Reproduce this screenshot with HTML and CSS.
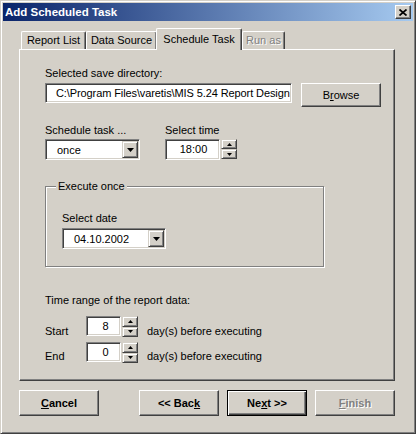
FILE: index.html
```html
<!DOCTYPE html>
<html>
<head>
<meta charset="utf-8">
<link rel="stylesheet" href="styles.css">
</head>
<body>
<div class="window">
  <div class="titlebar">
    <span class="title">Add Scheduled Task</span>
    <span class="close"><svg width="8" height="7" viewBox="0 0 8 7"><path d="M0.5 0.5 L7.5 6.5 M7.5 0.5 L0.5 6.5" stroke="#000" stroke-width="1.7" fill="none"/></svg></span>
  </div>
  <div class="tabs">
    <div class="tab t1">Report List</div>
    <div class="tab t2">Data Source</div>
    <div class="tab sel">Schedule Task</div>
    <div class="tab dis">Run as</div>
  </div>
  <div class="panel">
    <div class="label first">Selected save directory:</div>
    <div class="row dir-row">
      <div class="edit path">C:\Program Files\varetis\MIS 5.24 Report Design</div>
      <div class="btn browse">B<u>r</u>owse</div>
    </div>
    <div class="row sched-row">
      <div class="col col-task">
        <div class="label">Schedule task ...</div>
        <div class="combo task-combo"><span class="val">once</span><span class="dd"><svg width="7" height="4" viewBox="0 0 7 4"><polygon points="0,0 7,0 3.5,4" fill="#000"/></svg></span></div>
      </div>
      <div class="col">
        <div class="label">Select time</div>
        <div class="spin-row">
          <div class="edit time">18:00</div>
          <div class="spinner">
            <span class="sb"><svg width="5" height="3" viewBox="0 0 5 3"><polygon points="2.5,0 5,3 0,3" fill="#000"/></svg></span>
            <span class="sb"><svg width="5" height="3" viewBox="0 0 5 3"><polygon points="0,0 5,0 2.5,3" fill="#000"/></svg></span>
          </div>
        </div>
      </div>
    </div>
    <div class="group">
      <div class="legend">Execute once</div>
      <div class="label date-label">Select date</div>
      <div class="combo date-combo"><span class="val">04.10.2002</span><span class="dd"><svg width="7" height="4" viewBox="0 0 7 4"><polygon points="0,0 7,0 3.5,4" fill="#000"/></svg></span></div>
    </div>
    <div class="label range-label">Time range of the report data:</div>
    <div class="range start">
      <span class="rlabel">Start</span>
      <div class="edit num">8</div>
      <div class="spinner">
        <span class="sb"><svg width="5" height="3" viewBox="0 0 5 3"><polygon points="2.5,0 5,3 0,3" fill="#000"/></svg></span>
        <span class="sb"><svg width="5" height="3" viewBox="0 0 5 3"><polygon points="0,0 5,0 2.5,3" fill="#000"/></svg></span>
      </div>
      <span class="after">day(s) before executing</span>
    </div>
    <div class="range end">
      <span class="rlabel">End</span>
      <div class="edit num">0</div>
      <div class="spinner">
        <span class="sb"><svg width="5" height="3" viewBox="0 0 5 3"><polygon points="2.5,0 5,3 0,3" fill="#000"/></svg></span>
        <span class="sb"><svg width="5" height="3" viewBox="0 0 5 3"><polygon points="0,0 5,0 2.5,3" fill="#000"/></svg></span>
      </div>
      <span class="after">day(s) before executing</span>
    </div>
  </div>
  <div class="buttons">
    <div class="btn bold cancel"><u>C</u>ancel</div>
    <div class="btn bold back">&lt;&lt; Bac<u>k</u></div>
    <div class="btn bold next default">Ne<u>x</u>t &gt;&gt;</div>
    <div class="btn bold finish disabled"><u>F</u>inish</div>
  </div>
</div>
</body>
</html>
```

FILE: styles.css
```css
html, body {
  margin: 0;
  padding: 0;
  background: #D4D0C8;
}
body {
  font-family: "Liberation Sans", Arial, sans-serif;
  font-size: 11px;
  line-height: 13px;
  color: #000;
}
.window {
  width: 416px;
  height: 434px;
  box-sizing: border-box;
  border: 1px solid;
  border-color: #D4D0C8 #404040 #404040 #D4D0C8;
  box-shadow: inset 1px 1px #fff, inset -1px -1px #808080;
  padding: 2px;
  background: #D4D0C8;
}
.titlebar {
  height: 18px;
  display: flex;
  align-items: center;
  justify-content: space-between;
  background: linear-gradient(to right, #0A246A, #A6CAF0);
}
.title {
  color: #fff;
  font-weight: bold;
  font-size: 11.5px;
  padding-left: 2px;
}
.close {
  width: 16px;
  height: 14px;
  box-sizing: border-box;
  margin-right: 2px;
  background: #D4D0C8;
  border: 1px solid;
  border-color: #fff #404040 #404040 #fff;
  box-shadow: inset -1px -1px #808080;
  display: flex;
  align-items: center;
  justify-content: center;
}
.close svg { display: block; margin-left: -1px; }

/* tabs */
.tabs {
  margin-top: 7px;
  padding-left: 18px;
  height: 22px;
  margin-bottom: -1px;
  display: flex;
  align-items: flex-start;
}
.tab {
  box-sizing: border-box;
  height: 18px;
  margin-top: 3px;
  border-top: 1px solid #fff;
  border-left: 1px solid #fff;
  border-right: 1px solid #404040;
  border-radius: 2px 2px 0 0;
  box-shadow: inset -1px 0 #808080;
  text-align: center;
  line-height: 15px;
  padding-top: 1px;
  background: #D4D0C8;
}
.t1 { width: 65px; }
.t2 { width: 71px; }
.tab.sel {
  position: relative;
  z-index: 1;
  width: 86px;
  height: 22px;
  margin-top: 0;
  margin-left: -1px;
  padding-top: 2px;
  line-height: 16px;
}
.tab.dis {
  width: 43px;
  color: #808080;
  text-shadow: 1px 1px 0 #fff;
}

/* panel */
.panel {
  margin-left: 16px;
  width: 376px;
  height: 332px;
  box-sizing: border-box;
  border: 1px solid;
  border-color: #fff #404040 #404040 #fff;
  box-shadow: inset -1px -1px #808080;
  padding: 0 0 0 25px;
}
.label { white-space: nowrap; }
.label.first { margin-top: 17px; }
.row { display: flex; align-items: flex-start; }
.dir-row { margin-top: 3px; }
.edit {
  box-sizing: border-box;
  height: 20px;
  background: #fff;
  border: 1px solid;
  border-color: #808080 #fff #fff #808080;
  box-shadow: inset 1px 1px #404040, inset -1px -1px #D4D0C8;
  line-height: 18px;
  white-space: nowrap;
  overflow: hidden;
}
.path {
  width: 247px;
  padding-left: 10px;
  letter-spacing: -0.1px;
}
.btn {
  box-sizing: border-box;
  background: #D4D0C8;
  border: 1px solid;
  border-color: #fff #404040 #404040 #fff;
  box-shadow: inset -1px -1px #808080;
  display: flex;
  align-items: center;
  justify-content: center;
  white-space: nowrap;
}
.browse {
  margin-left: 9px;
  width: 80px;
  height: 24px;
  padding-top: 1px;
}
.sched-row { margin-top: 17px; }
.col-task { width: 120px; }
.combo {
  box-sizing: border-box;
  height: 21px;
  margin-top: 2px;
  background: #fff;
  border: 1px solid;
  border-color: #808080 #fff #fff #808080;
  box-shadow: inset 1px 1px #404040, inset -1px -1px #D4D0C8;
  padding: 1px;
  display: flex;
}
.combo .val {
  flex: 1;
  padding-left: 10px;
  line-height: 17px;
  padding-top: 1px;
}
.dd {
  width: 16px;
  height: 17px;
  box-sizing: border-box;
  background: #D4D0C8;
  border: 1px solid;
  border-color: #D4D0C8 #404040 #404040 #D4D0C8;
  box-shadow: inset 1px 1px #fff, inset -1px -1px #808080;
  display: flex;
  align-items: center;
  justify-content: center;
}
.dd svg { display: block; margin-top: 1px; }
.task-combo { width: 95px; }
.spin-row {
  display: flex;
  margin-top: 2px;
  height: 21px;
}
.time {
  width: 55px;
  text-align: center;
  padding-left: 2px;
  height: 21px;
  line-height: 19px;
}
.spinner {
  width: 16px;
  height: 20px;
  margin-left: 1px;
  display: flex;
  flex-direction: column;
}
.sb {
  flex: 1;
  box-sizing: border-box;
  background: #D4D0C8;
  border: 1px solid;
  border-color: #D4D0C8 #404040 #404040 #D4D0C8;
  box-shadow: inset 1px 1px #fff, inset -1px -1px #808080;
  display: flex;
  align-items: center;
  justify-content: center;
}
.sb svg { display: block; }

/* group box */
.group {
  margin-top: 26px;
  width: 279px;
  height: 81px;
  box-sizing: border-box;
  border: 1px solid #808080;
  box-shadow: 1px 1px 0 #fff, inset 1px 1px 0 #fff;
}
.legend {
  display: table;
  margin-top: -7px;
  margin-left: 10px;
  padding: 0 2px;
  background: #D4D0C8;
}
.date-label { margin-top: 19px; margin-left: 16px; }
.date-combo { width: 104px; margin-left: 16px; margin-top: 3px; }

/* range */
.range-label { margin-top: 27px; }
.range {
  display: flex;
  align-items: flex-start;
  white-space: nowrap;
}
.range.start { margin-top: 9px; }
.range.end { margin-top: 4px; }
.rlabel { width: 41px; margin-top: 9px; }
.range.end .rlabel { margin-top: 8px; }
.num {
  width: 35px;
  text-align: center;
  padding-left: 4px;
}
.range .spinner { height: 21px; }
.after { margin-left: 9px; margin-top: 9px; }
.range.end .after { margin-top: 8px; }

/* bottom buttons */
.buttons {
  display: flex;
  margin-top: 9px;
  padding-left: 16px;
}
.buttons .btn {
  width: 80px;
  height: 26px;
}
.bold { font-weight: bold; }
.back { margin-left: 40px; }
.next { margin-left: 8px; }
.finish { margin-left: 8px; }
.btn.default {
  border: 1px solid #000;
  box-shadow: inset 1px 1px #fff, inset -1px -1px #404040, inset -2px -2px #808080;
}
.btn.disabled {
  color: #808080;
  text-shadow: 1px 1px 0 #fff;
}
u { text-decoration-thickness: 1px; text-underline-offset: 1px; }
```
